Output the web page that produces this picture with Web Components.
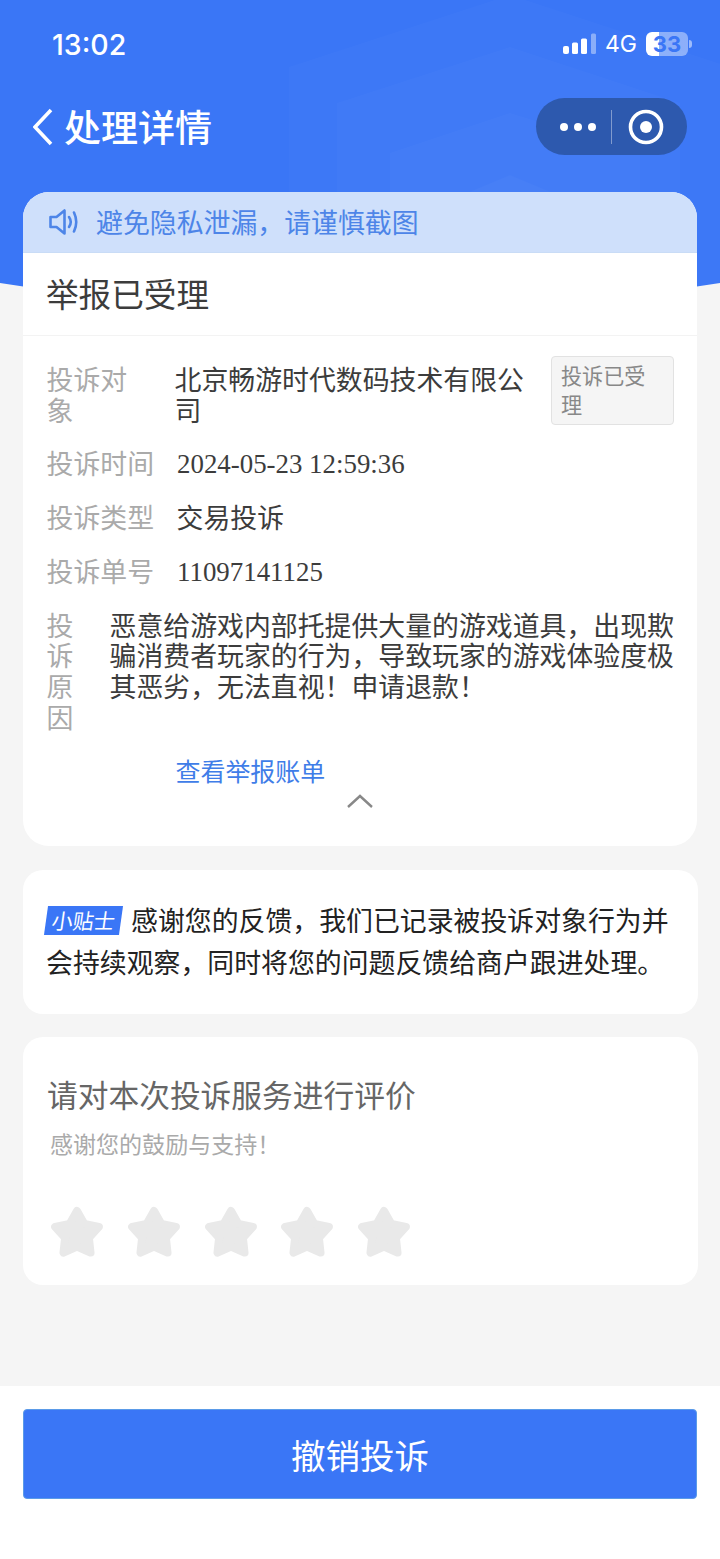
<!DOCTYPE html>
<html lang="zh-CN">
<head>
<meta charset="utf-8">
<title>处理详情</title>
<style>
html,body{margin:0;padding:0;background:#f5f5f5;}
body{font-family:"Noto Sans CJK SC","Noto Sans",sans-serif;}
</style>
</head>
<body>
<complaint-page>
  <status-bar slot="top" time="13:02" battery="33"></status-bar>
  <nav-bar slot="top">处理详情</nav-bar>
  <complaint-card heading="举报已受理" notice="避免隐私泄漏，请谨慎截图">
    <info-row label="投诉对象" variant="wrap" tag="投诉已受理">北京畅游时代数码技术有限公司</info-row>
    <info-row label="投诉时间" variant="num">2024-05-23 12:59:36</info-row>
    <info-row label="投诉类型">交易投诉</info-row>
    <info-row label="投诉单号" variant="num">11097141125</info-row>
    <info-row label="投诉原因" variant="narrow">恶意给游戏内部托提供大量的游戏道具，出现欺骗消费者玩家的行为，导致玩家的游戏体验度极其恶劣，无法直视！申请退款！</info-row>
  </complaint-card>
  <tip-card badge="小贴士">感谢您的反馈，我们已记录被投诉对象行为并会持续观察，同时将您的问题反馈给商户跟进处理。</tip-card>
  <rating-card heading="请对本次投诉服务进行评价" sub="感谢您的鼓励与支持！"></rating-card>
  <action-bar slot="bottom">撤销投诉</action-bar>
</complaint-page>
<script>
function shadow(el, html){
  const root = el.attachShadow({mode:'open'});
  root.innerHTML = html;
  return root;
}

customElements.define('complaint-page', class extends HTMLElement{
  constructor(){
    super();
    shadow(this, `<style>
      :host{display:flex;flex-direction:column;position:relative;width:720px;height:1559px;overflow:hidden;background:#f5f5f5;color:#333;font-family:"Noto Sans CJK SC","Noto Sans",sans-serif;}
      .hero{position:absolute;left:0;top:0;width:720px;height:300px;}
      .top{position:relative;display:block;}
      .main{position:relative;display:flex;flex-direction:column;gap:23.5px;padding:0 22px 0 23px;}
      .bottom{margin-top:auto;position:relative;display:block;}
    </style>
    <svg class="hero" viewBox="0 0 720 300" aria-hidden="true">
      <path d="M0 0H720V283Q360 340 0 283Z" fill="#3a76f6"/>
      <path d="M289 67L510 -5L730 67V300H289Z" fill="#fff" fill-opacity=".018"/>
      <path d="M337 103L510 47L680 103V300H337Z" fill="#fff" fill-opacity=".018"/>
      <path d="M390 153L510 113L640 153V300H390Z" fill="#fff" fill-opacity=".018"/>
      <path d="M450 200L510 175L570 200V300H450Z" fill="#fff" fill-opacity=".025"/>
    </svg>
    <div class="top"><slot name="top"></slot></div>
    <div class="main"><slot></slot></div>
    <div class="bottom"><slot name="bottom"></slot></div>`);
  }
});

customElements.define('status-bar', class extends HTMLElement{
  constructor(){
    super();
    const t = this.getAttribute('time'), b = this.getAttribute('battery');
    shadow(this, `<style>
      :host{display:flex;align-items:center;justify-content:space-between;height:88px;padding:0 28px 0 52px;color:#fff;font-family:Inter,Roboto,sans-serif;box-sizing:border-box;}
      .time{font-size:28.5px;font-weight:500;}
      .right{display:flex;align-items:center;}
      .net{font-size:23px;margin:0 9px;}
      .bat{width:42px;height:24px;border-radius:6px;background:linear-gradient(90deg,#fff 0 13px,rgba(255,255,255,.42) 13px);color:#3a76f6;font-size:22px;font-weight:700;line-height:24px;text-align:center;}
      .nub{width:3px;height:8px;margin-left:1px;background:rgba(255,255,255,.5);border-radius:0 3px 3px 0;}
    </style>
    <span class="time">${t}</span>
    <span class="right">
      <svg width="33" height="22" viewBox="0 0 33 22" aria-hidden="true">
        <rect x="0" y="13" width="6" height="8" rx="2" fill="#fff"/>
        <rect x="9" y="9.5" width="6" height="11.5" rx="1.5" fill="#fff"/>
        <rect x="18" y="5.5" width="6" height="15.5" rx="1.5" fill="#fff"/>
        <rect x="28" y="0.5" width="5" height="20.5" rx="1.5" fill="#fff" fill-opacity=".4"/>
      </svg>
      <span class="net">4G</span>
      <span class="bat">${b}</span><span class="nub"></span>
    </span>`);
  }
});

customElements.define('nav-bar', class extends HTMLElement{
  constructor(){
    super();
    shadow(this, `<style>
      :host{display:flex;align-items:center;height:77px;margin-bottom:27px;padding:0 33px;color:#fff;box-sizing:border-box;}
      .back{display:block;flex:none;margin-right:11px;}
      .title{font-size:37px;font-weight:500;line-height:77px;}
      .cap{margin-left:auto;display:flex;align-items:center;width:151px;height:57px;border-radius:29px;background:#2d59ae;box-sizing:border-box;}
      .dots{width:75px;box-sizing:border-box;padding-left:9px;display:flex;justify-content:center;gap:6px;}
      .dots i{width:8px;height:8px;border-radius:50%;background:#fff;display:block;}
      .sep{width:1px;height:34px;background:rgba(255,255,255,.4);}
      .ring{display:block;margin-left:16px;}
    </style>
    <svg class="back" width="20" height="38" viewBox="0 0 20 38" aria-hidden="true"><path d="M18 2L2 19L18 36" fill="none" stroke="#fff" stroke-width="3.6"/></svg>
    <span class="title"><slot></slot></span>
    <span class="cap">
      <span class="dots"><i></i><i></i><i></i></span>
      <span class="sep"></span>
      <svg class="ring" width="36" height="36" viewBox="0 0 36 36" aria-hidden="true"><circle cx="18" cy="18" r="15.5" fill="none" stroke="#fff" stroke-width="3.6"/><circle cx="18" cy="18" r="6" fill="#fff"/></svg>
    </span>`);
  }
});

customElements.define('complaint-card', class extends HTMLElement{
  constructor(){
    super();
    const h = this.getAttribute('heading'), n = this.getAttribute('notice');
    shadow(this, `<style>
      :host{display:block;width:674px;background:#fff;border-radius:26px;overflow:hidden;}
      .notice{display:flex;align-items:center;height:60px;padding-left:26px;background:#cfe0fb;color:#4d85e8;font-size:26.88px;border-bottom:1px solid #c9dcf6;}
      .notice svg{flex:none;margin-right:18px;}
      .notice span{padding-bottom:2px;}
      h2{margin:0;height:82px;line-height:80px;padding-left:23px;font-size:32.64px;font-weight:400;color:#3c3c3c;border-bottom:1px solid #f3f3f3;}
      .body{padding:28px 23px 0 23.5px;display:flex;flex-direction:column;gap:23px;}
      .link{display:block;margin:0 0 0 129px;font-size:24.96px;line-height:30.7px;color:#3f7de8;}
      .more{display:block;margin:7px auto 0;}
      .pad{height:37px;}
    </style>
    <div class="notice">
      <svg width="29" height="28" viewBox="0 0 29 28" aria-hidden="true" fill="none" stroke="#4d85e8" stroke-width="2.6" stroke-linejoin="round" stroke-linecap="round">
        <path d="M1.5 9H7.5L15.5 2.5V25.5L7.5 19H1.5Z"/>
        <path d="M20 9Q23.5 14 20 19"/><path d="M25 4.5Q29.5 14 25 23.5"/>
      </svg>
      <span>${n}</span>
    </div>
    <h2>${h}</h2>
    <div class="body"><slot></slot>
      <a class="link">查看举报账单</a>
    </div>
    <svg class="more" width="28" height="16" viewBox="0 0 28 16" aria-hidden="true"><path d="M2 14L14 3L26 14" fill="none" stroke="#888" stroke-width="2.4"/></svg>
    <div class="pad"></div>`);
  }
});

customElements.define('info-row', class extends HTMLElement{
  constructor(){
    super();
    const l = this.getAttribute('label'), tag = this.getAttribute('tag');
    shadow(this, `<style>
      :host{display:flex;align-items:flex-start;font-size:26.88px;line-height:30.7px;color:#3c3c3c;position:relative;}
      .l{flex:none;width:130px;color:#aaa;}
      .v{flex:1;min-width:0;}
      :host([variant="wrap"]) .l{width:88px;margin-right:40px;}
      :host([variant="wrap"]) .v{flex:none;width:352px;}
      :host([variant="num"]) .v{font-family:"Liberation Serif",serif;margin-left:.5px;padding-top:2px;line-height:28.7px;}
      :host([variant="narrow"]) .l{width:27px;margin-right:36px;}
      :host([variant="narrow"]) .v{margin-right:-2px;}
      .tag{position:absolute;right:0;top:-8px;width:123px;height:69px;box-sizing:border-box;padding:4px 9px;background:#f5f5f5;border:1px solid #e2e2e2;border-radius:4px;color:#888;font-size:21.12px;line-height:29px;}
    </style>
    <span class="l">${l}</span>
    <span class="v"><slot></slot></span>
    ${tag ? `<span class="tag">${tag}</span>` : ''}`);
  }
});

customElements.define('tip-card', class extends HTMLElement{
  constructor(){
    super();
    const b = this.getAttribute('badge');
    shadow(this, `<style>
      :host{display:block;width:675px;box-sizing:border-box;padding:29px 23px 31px;background:#fff;border-radius:20px;font-size:26.88px;line-height:42px;color:#222;}
      .badge{display:inline-block;height:29px;width:75px;margin:0 10px 0 0;background:#3a76f6;transform:skewX(-8deg);color:#fff;font-size:21.12px;line-height:29px;text-align:center;vertical-align:2px;}
    </style>
    <span class="badge">${b}</span><slot></slot>`);
  }
});

customElements.define('star-rating', class extends HTMLElement{
  constructor(){
    super();
    const star = `<svg width="52" height="54" viewBox="0 0 52 54" aria-hidden="true"><path d="M26 7L33.35 19.89L47.87 22.89L37.89 33.86L39.52 48.61L26 42.5L12.48 48.61L14.11 33.86L4.13 22.89L18.65 19.89Z" fill="#e9e9e9" stroke="#e9e9e9" stroke-width="8" stroke-linejoin="round"/></svg>`;
    shadow(this, `<style>
      :host{display:flex;gap:24.8px;}
      svg{display:block;flex:none;}
    </style>${star.repeat(5)}`);
  }
});

customElements.define('rating-card', class extends HTMLElement{
  constructor(){
    super();
    const h = this.getAttribute('heading'), s = this.getAttribute('sub');
    shadow(this, `<style>
      :host{display:block;width:675px;height:248px;box-sizing:border-box;padding:37px 24px 0;background:#fff;border-radius:20px;}
      .h{font-size:30.72px;line-height:40px;color:#666;}
      .s{margin:14px 0 46px 3px;font-size:23.04px;line-height:30px;color:#aaa;}
      star-rating{margin-left:4px;}
    </style>
    <div class="h">${h}</div>
    <div class="s">${s}</div>
    <star-rating></star-rating>`);
  }
});

customElements.define('action-bar', class extends HTMLElement{
  constructor(){
    super();
    shadow(this, `<style>
      :host{display:block;height:173px;box-sizing:border-box;padding:23px 23px 0;background:#fff;}
      .btn{display:flex;align-items:center;justify-content:center;height:90px;box-sizing:border-box;background:#3a76f6;border:1px solid #5b9be8;border-radius:4px;color:#fff;font-size:34.56px;}
    </style>
    <div class="btn" role="button"><slot></slot></div>`);
  }
});
</script>
</body>
</html>
